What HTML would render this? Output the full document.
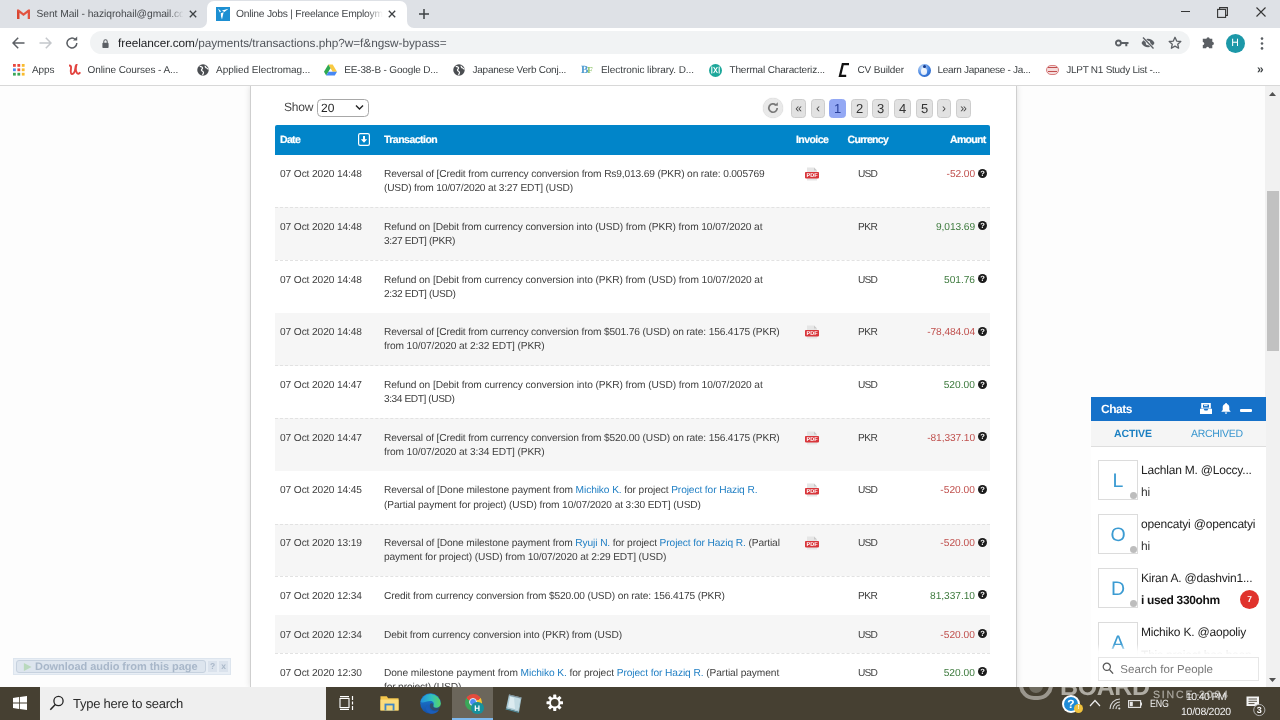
<!DOCTYPE html>
<html>
<head>
<meta charset="utf-8">
<title>Online Jobs | Freelance Employment</title>
<style>
*{box-sizing:border-box;margin:0;padding:0}
html,body{text-rendering:geometricPrecision;width:1280px;height:720px;overflow:hidden;background:#fff;font-family:"Liberation Sans",sans-serif;}
.abs{position:absolute}
#root{will-change:transform;opacity:.999;transform:rotate(0.0005deg);position:relative;width:1280px;height:720px;overflow:hidden;background:#fdfdfd}
/* ---------- chrome ---------- */
#tabbar{left:0;top:0;width:1280px;height:28px;background:#dee1e6}
#tab2{left:207px;top:1px;width:200px;height:27px;background:#fff;border-radius:7px 7px 0 0}
.tabtxt{font-size:10.3px;color:#45484c;white-space:nowrap;overflow:hidden;top:8px;height:14px;line-height:14px;letter-spacing:-0.1px}
#toolbar{left:0;top:28px;width:1280px;height:30px;background:#fff}
#omni{left:90px;top:31px;width:1100px;height:22.5px;border-radius:11.5px;background:#f1f3f4}
#url{left:118px;top:36px;font-size:11.8px;color:#202124;line-height:15px;white-space:nowrap;letter-spacing:-0.12px}
#url span{color:#50545a}
#bmbar{left:0;top:58px;width:1280px;height:28px;background:#fff;border-bottom:1px solid #d8d8d8}
.bm{top:64px;font-size:10px;color:#3c4043;line-height:14px;white-space:nowrap;letter-spacing:-0.1px}
/* ---------- page ---------- */
#page{left:0;top:86px;width:1265px;height:601px;background:#fdfdfd}
#panel{left:250px;top:86px;width:767px;height:601px;background:#fff;border-left:1px solid #cfcfcf;border-right:1px solid #cfcfcf;box-shadow:0 0 6px rgba(0,0,0,.13);clip-path:inset(0 -10px 0 -10px)}
#sbar{left:1265px;top:86px;width:15px;height:601px;background:#f1f1f1}
#sthumb{left:1267px;top:190.5px;width:11.5px;height:160px;background:#c1c1c1}
#thead{left:275px;top:125px;width:715px;height:30px;background:#0085c9;border-radius:2px 2px 0 0}
.th{top:134px;-webkit-text-stroke:0.2px #fff;font-size:10.5px;font-weight:bold;color:#fff;line-height:13px;white-space:nowrap;letter-spacing:-0.35px}
.row{left:275px;width:715px;border-top:1px dashed #e2e2e2}
.row.alt{background:#f6f6f6}
.c{font-size:10.2px;color:#3e3e3e;line-height:14px;white-space:nowrap;letter-spacing:-0.28px}
.c a{color:#1f7fc4;text-decoration:none}
.neg{color:#c0504d}
.pos{color:#3c7a3c}
.pg{top:99px;height:18.5px;border-radius:3.5px;background:#e2e2e2;border:1px solid #cdcdcd;font-size:13px;color:#333;text-align:center;line-height:18.5px}
.pg.ar{font-size:12px;line-height:17.5px;color:#444}
.av{left:1098px;width:40px;height:40px;border:1px solid #dcdcdc;background:#fff;color:#3a9bd2;font-size:19.5px;text-align:center;line-height:40px}
.dot{left:1130px;width:7px;height:7px;border-radius:4px;background:#bdbdbd}
.cn{left:1141px;font-size:12px;color:#222;line-height:15px;white-space:nowrap;letter-spacing:-0.2px}
.cm{left:1141px;font-size:12px;color:#333;line-height:15px;white-space:nowrap;letter-spacing:-0.2px}
.tt{font-size:10.5px;color:#f1f1f1;line-height:14px;white-space:nowrap;letter-spacing:-0.150px}
.pg.cur{background:#93a8f4;border-color:#93a8f4;color:#2a409c}
</style>
</head>
<body>
<div id="root">

<!-- ======= TAB BAR ======= -->
<div id="tabbar" class="abs"></div>
<div id="tab2" class="abs"></div>
<svg class="abs" style="left:200px;top:21px" width="7" height="7" viewBox="0 0 7 7"><path d="M7 0v7h-7a7 7 0 0 0 7-7z" fill="#fff"/></svg>
<svg class="abs" style="left:407px;top:21px" width="7" height="7" viewBox="0 0 7 7"><path d="M0 0v7h7a7 7 0 0 1-7-7z" fill="#fff"/></svg>
<div id="tab1t" class="abs tabtxt" style="letter-spacing:-0.077px;left:36.5px;width:146.5px">Sent Mail - haziqrohail@gmail.co</div>
<div id="tab2t" class="abs tabtxt" style="letter-spacing:-0.245px;left:236px;width:146.5px">Online Jobs | Freelance Employm</div>

<!-- ======= TOOLBAR ======= -->
<div id="toolbar" class="abs"></div>
<div id="omni" class="abs"></div>
<div id="url" class="abs" style="letter-spacing:-0.035px">freelancer.com<span>/payments/transactions.php?w=f&amp;ngsw-bypass=</span></div>

<!-- ======= BOOKMARKS ======= -->
<div id="bmbar" class="abs"></div>
<div id="bm0" class="abs bm" style="letter-spacing:-0.082px;left:32px">Apps</div>
<div id="bm1" class="abs bm" style="letter-spacing:-0.073px;left:87.5px">Online Courses - A...</div>
<div id="bm2" class="abs bm" style="letter-spacing:-0.038px;left:216px">Applied Electromag...</div>
<div id="bm3" class="abs bm" style="letter-spacing:-0.161px;left:344.25px">EE-38-B - Google D...</div>
<div id="bm4" class="abs bm" style="letter-spacing:-0.230px;left:472.5px">Japanese Verb Conj...</div>
<div id="bm5" class="abs bm" style="letter-spacing:-0.054px;left:601px">Electronic library. D...</div>
<div id="bm6" class="abs bm" style="letter-spacing:-0.161px;left:729.5px">Thermal Characteriz...</div>
<div id="bm7" class="abs bm" style="letter-spacing:-0.140px;left:857.5px">CV Builder</div>
<div id="bm8" class="abs bm" style="letter-spacing:-0.296px;left:937.5px">Learn Japanese - Ja...</div>
<div id="bm9" class="abs bm" style="letter-spacing:-0.264px;left:1066.25px">JLPT N1 Study List -...</div>

<!-- ======= CHROME ICONS ======= -->
<!-- gmail -->
<svg class="abs" style="left:17px;top:9px" width="13" height="10" viewBox="0 0 13 10"><path d="M0 0.500h1.800l4.700 3.800l4.700-3.800h1.800v9.500h-2.300v-6.200l-4.200 3.300l-4.200-3.300v6.200h-2.300z" fill="#e2523f"/><path d="M0 1v9h2.300v-6.200z" fill="#d9442f"/></svg>
<svg class="abs cx" style="left:189px;top:10px" width="8" height="8" viewBox="0 0 8 8"><path d="M0.800 0.800l6.400 6.400M7.200 0.800l-6.400 6.400" stroke="#3c4043" stroke-width="1.300"/></svg>
<!-- tab fade -->
<div class="abs" style="left:168px;top:6px;width:16px;height:18px;background:linear-gradient(90deg,rgba(222,225,230,0),#dee1e6)"></div>
<div class="abs" style="left:367px;top:6px;width:16px;height:18px;background:linear-gradient(90deg,rgba(255,255,255,0),#fff)"></div>
<!-- freelancer favicon -->
<svg class="abs" style="left:216px;top:7px" width="14" height="14" viewBox="0 0 14 14"><rect width="14" height="14" fill="#1b8fd2"/><path d="M2 1.500l3 2.800l-1.200 1.200zM6 3.500l6.500-1.800l-4.200 3.200zM4.800 6.200l2.800-1l-1.600 7.300l-1-3z" fill="#fff"/></svg>
<svg class="abs cx" style="left:388px;top:10px" width="8" height="8" viewBox="0 0 8 8"><path d="M0.800 0.800l6.400 6.400M7.200 0.800l-6.400 6.400" stroke="#3c4043" stroke-width="1.300"/></svg>
<svg class="abs" style="left:418px;top:8px" width="12" height="12" viewBox="0 0 12 12"><path d="M6 1v10M1 6h10" stroke="#3c4043" stroke-width="1.500"/></svg>
<!-- window controls -->
<div class="abs" style="left:1181px;top:11px;width:9px;height:1.200px;background:#333"></div>
<svg class="abs" style="left:1217px;top:7px" width="11" height="11" viewBox="0 0 11 11"><rect x="0.600" y="2.400" width="8" height="8" fill="none" stroke="#333" stroke-width="1.100"/><path d="M2.600 2.400v-1.800h7.800v7.800h-1.800" fill="none" stroke="#333" stroke-width="1.100"/></svg>
<svg class="abs" style="left:1256px;top:7px" width="10" height="10" viewBox="0 0 10 10"><path d="M0.500 0.500l9 9M9.500 0.500l-9 9" stroke="#333" stroke-width="1.100"/></svg>
<!-- nav -->
<svg class="abs" style="left:12px;top:37px" width="13" height="12" viewBox="0 0 13 12"><path d="M12.500 6h-11M6.200 0.800l-5.200 5.200l5.200 5.200" fill="none" stroke="#5a5e63" stroke-width="1.500"/></svg>
<svg class="abs" style="left:39px;top:37px" width="13" height="12" viewBox="0 0 13 12"><path d="M0.500 6h11M6.800 0.800l5.200 5.200l-5.200 5.200" fill="none" stroke="#c4c7cb" stroke-width="1.500"/></svg>
<svg class="abs" style="left:65px;top:36px" width="14" height="14" viewBox="0 0 14 14"><path d="M11.800 7a4.900 4.900 0 1 1-1.500-3.500" fill="none" stroke="#5a5e63" stroke-width="1.500"/><path d="M8 4.600h4.200v-4.200z" fill="#5a5e63"/></svg>
<svg class="abs" style="left:101.5px;top:38.5px" width="7" height="9.3" viewBox="0 0 9 12"><rect x="0.500" y="5" width="8" height="6.500" rx="1" fill="#5a5e63"/><path d="M2.300 5.200v-1.900a2.200 2.200 0 0 1 4.400 0v1.900" fill="none" stroke="#5a5e63" stroke-width="1.300"/></svg>
<!-- omnibox right icons -->
<svg class="abs" style="left:1115px;top:39px" width="14" height="8" viewBox="0 0 14 8"><circle cx="3.400" cy="4" r="2.500" fill="none" stroke="#5a5e63" stroke-width="1.800"/><path d="M6 3h7.500v2h-1.200v2.200h-2v-2.200h-4.300z" fill="#5a5e63"/></svg>
<svg class="abs" style="left:1141px;top:37px" width="14" height="12" viewBox="0 0 14 12"><path d="M0.500 6c1.500-3 4-4.300 6.500-4.300s5 1.300 6.500 4.300c-1.500 3-4 4.300-6.500 4.300s-5-1.300-6.500-4.300z" fill="#5a5e63"/><circle cx="7" cy="6" r="2.300" fill="#f1f3f4"/><circle cx="7" cy="6" r="1.100" fill="#5a5e63"/><path d="M2 0.500l10.500 11" stroke="#f1f3f4" stroke-width="2.600"/><path d="M2 0.500l10.500 11" stroke="#5a5e63" stroke-width="1.300"/></svg>
<svg class="abs" style="left:1168px;top:36px" width="14" height="14" viewBox="0 0 14 14"><path d="M7 1.300l1.700 3.800l4.100.400l-3.100 2.700l.900 4l-3.600-2.100l-3.600 2.100l.900-4l-3.100-2.700l4.100-.400z" fill="none" stroke="#5a5e63" stroke-width="1.300" stroke-linejoin="round"/></svg>
<svg class="abs" style="left:1201px;top:36px" width="14" height="14" viewBox="0 0 14 14"><path d="M5.500 2.800a1.600 1.600 0 0 1 3.200 0h2.600v3a1.600 1.600 0 0 1 0 3.200v3.300h-3.200a1.500 1.500 0 0 0-3 0h-3.300v-3.300a1.500 1.500 0 0 0 0-3v-3.200z" fill="#5a5e63"/></svg>
<div class="abs" style="left:1225.500px;top:33.500px;width:19px;height:19px;border-radius:10px;background:#1b98a8;color:#fff;font-size:10.500px;text-align:center;line-height:19px">H</div>
<svg class="abs" style="left:1260px;top:37px" width="4" height="13" viewBox="0 0 4 13"><circle cx="2" cy="1.600" r="1.300" fill="#5a5e63"/><circle cx="2" cy="6.500" r="1.300" fill="#5a5e63"/><circle cx="2" cy="11.400" r="1.300" fill="#5a5e63"/></svg>
<!-- bookmark favicons -->
<svg class="abs" style="left:13px;top:64px" width="12" height="12" viewBox="0 0 12 12"><g><rect x="0" y="0" width="2.800" height="2.800" fill="#e8453c"/><rect x="4.400" y="0" width="2.800" height="2.800" fill="#e8453c"/><rect x="8.800" y="0" width="2.800" height="2.800" fill="#f9bb2d"/><rect x="0" y="4.400" width="2.800" height="2.800" fill="#4688f1"/><rect x="4.400" y="4.400" width="2.800" height="2.800" fill="#e8453c"/><rect x="8.800" y="4.400" width="2.800" height="2.800" fill="#f9bb2d"/><rect x="0" y="8.800" width="2.800" height="2.800" fill="#3aa757"/><rect x="4.400" y="8.800" width="2.800" height="2.800" fill="#3aa757"/><rect x="8.800" y="8.800" width="2.800" height="2.800" fill="#f9bb2d"/></g></svg>
<svg class="abs" style="left:68px;top:64px" width="13" height="12" viewBox="0 0 13 12"><path d="M1 1.500c2 0 2.200 1 2 3s-.800 5 .800 5.500s3.200-2 3.400-5s.500-3.700 1.300-4.200c-.600 2 -1 6 .300 8s2.700.500 3.400-.600" fill="none" stroke="#e2433f" stroke-width="1.900"/></svg>
<svg class="abs gl" style="left:196.7px;top:64px" width="12" height="12" viewBox="0 0 13 13"><circle cx="6.500" cy="6.500" r="6.200" fill="#4a4d51"/><path d="M3 2.500c1 .500 2.500.300 3 1.500s-1.500 1.500-1.200 2.700s2 1 2.200 2.300s-1 2-.800 3.200M9 2c-.500 1 .500 2 1.500 2.300s1.500 1.500 1.800 1.500" fill="none" stroke="#fff" stroke-width="1.300"/></svg>
<svg class="abs" style="left:324px;top:64px" width="13" height="12" viewBox="0 0 13 12"><path d="M4.300 0.500h4.400l4.300 7.300h-4.400z" fill="#f9c941"/><path d="M4.300 0.500l-4.300 7.300l2.200 3.700l4.300-7.300z" fill="#2da94f"/><path d="M4.400 7.800h8.600l-2.200 3.700h-8.600z" fill="#4688f4"/></svg>
<svg class="abs gl" style="left:453.2px;top:64px" width="12" height="12" viewBox="0 0 13 13"><circle cx="6.500" cy="6.500" r="6.200" fill="#4a4d51"/><path d="M3 2.500c1 .500 2.500.300 3 1.500s-1.500 1.500-1.200 2.700s2 1 2.200 2.300s-1 2-.800 3.200M9 2c-.500 1 .500 2 1.500 2.300s1.500 1.500 1.800 1.500" fill="none" stroke="#fff" stroke-width="1.300"/></svg>
<div class="abs" style="left:581px;top:63px;width:14px;height:14px;font-family:'Liberation Serif',serif;font-size:11px;font-weight:bold;line-height:14px;color:#4b9ad0;letter-spacing:-1px">B<span style="color:#8fc46a;font-size:9px">F</span></div>
<div class="abs" style="left:709px;top:63.500px;width:13px;height:13px;border-radius:7px;background:#1ba79a"></div>
<svg class="abs" style="left:711px;top:66px" width="9" height="8" viewBox="0 0 9 8"><path d="M0.800 7.500v-7M8.200 7.500v-7M2.600 1l3.800 6M6.400 1l-3.800 6" fill="none" stroke="#fff" stroke-width="1.100"/></svg>
<svg class="abs" style="left:838px;top:63px" width="12" height="14" viewBox="0 0 12 14"><path d="M11 1.200h-6.200l-2.800 11.600h6.200" fill="none" stroke="#111" stroke-width="2.300"/></svg>
<div class="abs" style="left:917.500px;top:63.500px;width:13px;height:13px;border-radius:7px;background:radial-gradient(circle at 35% 30%,#cfe3fb,#3c7fe0 55%,#1d4fb0)"></div>
<div class="abs" style="left:921px;top:68px;width:6px;height:7px;border-radius:3px;background:#fff;opacity:.85"></div>
<div class="abs" style="left:923px;top:65px;width:3px;height:3px;border-radius:2px;background:#143b8f"></div>
<div class="abs" style="left:1046px;top:65px;width:13px;height:10px;border-radius:5px;background:#f4dcdc;border:1px solid #d87f7f"></div>
<div class="abs" style="left:1048px;top:67px;width:9px;height:5px;border-top:1.500px solid #c14c4c;border-bottom:1.500px solid #c14c4c"></div>
<div class="abs" style="left:1257px;top:62px;font-size:12px;font-weight:bold;color:#3c4043;line-height:14px">&raquo;</div>

<!-- ======= PAGE ======= -->
<div id="page" class="abs"></div>
<div id="panel" class="abs"></div>
<div id="sbar" class="abs"></div>
<div id="sthumb" class="abs"></div>

<!-- show / pagination -->
<div class="abs" style="left:284px;top:100px;font-size:12px;color:#444;line-height:15px;letter-spacing:-0.2px">Show</div>
<div class="abs" style="left:317px;top:99px;width:52px;height:18px;border:1px solid #a8a8a8;border-radius:4.5px;background:#fff"></div>
<div class="abs" style="left:321px;top:101px;font-size:12px;color:#222;line-height:15px">20</div>
<svg class="abs" style="left:355px;top:104px" width="9" height="7" viewBox="0 0 9 7"><path d="M1 1.5l3.5 3.5l3.5-3.5" fill="none" stroke="#222" stroke-width="1.4"/></svg>

<div class="abs" style="left:763px;top:98px;width:20px;height:20px;border-radius:10px;background:#e9e9e9;box-shadow:0 0 1px #bbb"></div>
<svg class="abs" style="left:766px;top:101px" width="14" height="14" viewBox="0 0 14 14"><path d="M11.2 7a4.2 4.2 0 1 1-1.3-3" fill="none" stroke="#777" stroke-width="1.7"/><path d="M8.2 4.8h3.6v-3.6z" fill="#777"/></svg>

<div class="abs pg ar" style="left:791px;width:15px">&laquo;</div>
<div class="abs pg ar" style="left:811px;width:14px">&lsaquo;</div>
<div class="abs pg cur" style="left:829px;width:17px">1</div>
<div class="abs pg" style="left:851px;width:17px">2</div>
<div class="abs pg" style="left:872px;width:17px">3</div>
<div class="abs pg" style="left:894px;width:17px">4</div>
<div class="abs pg" style="left:916px;width:17px">5</div>
<div class="abs pg ar" style="left:937px;width:14px">&rsaquo;</div>
<div class="abs pg ar" style="left:956px;width:15px">&raquo;</div>

<!-- table header -->
<div id="thead" class="abs"></div>
<div id="th0" class="abs th" style="letter-spacing:-0.655px;left:280px">Date</div>
<svg class="abs" style="left:358px;top:133px" width="12" height="13" viewBox="0 0 12 13"><rect x="0.6" y="0.6" width="10.8" height="11.8" rx="1.6" fill="none" stroke="#fff" stroke-width="1.2"/><path d="M5 3h2v3.2h2.2L6 9.8 2.8 6.200H5z" fill="#fff"/></svg>
<div id="th1" class="abs th" style="letter-spacing:-0.524px;left:384px">Transaction</div>
<div id="th2" class="abs th" style="letter-spacing:-0.565px;left:796px">Invoice</div>
<div id="th3" class="abs th" style="letter-spacing:-0.701px;left:847.6px">Currency</div>
<div id="th4" class="abs th" style="letter-spacing:-0.694px;right:294.5px">Amount</div>

<!--ROWS-->
<div class="abs row" style="top:154.6px;height:52.9px;border-top:0"></div>
<div id="r0d" class="abs c" style="letter-spacing:-0.114px;left:280px;top:168px">07 Oct 2020 14:48</div>
<div id="r0l0" class="abs c" style="letter-spacing:-0.149px;left:384px;top:168px">Reversal of [Credit from currency conversion from Rs9,013.69 (PKR) on rate: 0.005769</div>
<div id="r0l1" class="abs c" style="letter-spacing:-0.189px;left:384px;top:182px">(USD) from 10/07/2020 at 3:27 EDT] (USD)</div>
<svg class="abs" style="left:805px;top:167.1px" width="14" height="14" viewBox="0 0 14 14"><path d="M2 0.5h7l3 3v10h-10z" fill="#e6e6e6"/><path d="M9 0.5v3h3z" fill="#c9c9c9"/><rect x="0" y="5" width="14" height="6.4" rx="0.8" fill="#d8353a"/><text x="7" y="10.3" font-family="Liberation Sans" font-weight="bold" font-size="5.6" fill="#fff" text-anchor="middle">PDF</text></svg>
<div id="r0c" class="abs c" style="letter-spacing:-0.858px;left:858px;top:168px">USD</div>
<div id="r0a" class="abs c neg" style="letter-spacing:-0.078px;right:305px;top:168px">-52.00</div>
<svg class="abs" style="left:977.5px;top:168.7px" width="9" height="9" viewBox="0 0 9 9"><circle cx="4.5" cy="4.5" r="4.5" fill="#1a1a1a"/><text x="4.5" y="7.3" font-family="Liberation Sans" font-weight="bold" font-size="7.5" fill="#fff" text-anchor="middle">?</text></svg>
<div class="abs row alt" style="top:207.3px;height:52.9px"></div>
<div id="r1d" class="abs c" style="letter-spacing:-0.114px;left:280px;top:221px">07 Oct 2020 14:48</div>
<div id="r1l0" class="abs c" style="letter-spacing:-0.095px;left:384px;top:221px">Refund on [Debit from currency conversion into (USD) from (PKR) from 10/07/2020 at</div>
<div id="r1l1" class="abs c" style="letter-spacing:-0.367px;left:384px;top:235px">3:27 EDT] (PKR)</div>
<div id="r1c" class="abs c" style="letter-spacing:-0.577px;left:858px;top:221px">PKR</div>
<div id="r1a" class="abs c pos" style="letter-spacing:-0.079px;right:305px;top:221px">9,013.69</div>
<svg class="abs" style="left:977.5px;top:221.4px" width="9" height="9" viewBox="0 0 9 9"><circle cx="4.5" cy="4.5" r="4.5" fill="#1a1a1a"/><text x="4.5" y="7.3" font-family="Liberation Sans" font-weight="bold" font-size="7.5" fill="#fff" text-anchor="middle">?</text></svg>
<div class="abs row" style="top:260.0px;height:52.9px"></div>
<div id="r2d" class="abs c" style="letter-spacing:-0.114px;left:280px;top:274px">07 Oct 2020 14:48</div>
<div id="r2l0" class="abs c" style="letter-spacing:-0.091px;left:384px;top:274px">Refund on [Debit from currency conversion into (PKR) from (USD) from 10/07/2020 at</div>
<div id="r2l1" class="abs c" style="letter-spacing:-0.371px;left:384px;top:288px">2:32 EDT] (USD)</div>
<div id="r2c" class="abs c" style="letter-spacing:-0.858px;left:858px;top:274px">USD</div>
<div id="r2a" class="abs c pos" style="letter-spacing:-0.034px;right:305px;top:274px">501.76</div>
<svg class="abs" style="left:977.5px;top:274.1px" width="9" height="9" viewBox="0 0 9 9"><circle cx="4.5" cy="4.5" r="4.5" fill="#1a1a1a"/><text x="4.5" y="7.3" font-family="Liberation Sans" font-weight="bold" font-size="7.5" fill="#fff" text-anchor="middle">?</text></svg>
<div class="abs row alt" style="top:312.7px;height:52.9px;border-top:0"></div>
<div id="r3d" class="abs c" style="letter-spacing:-0.114px;left:280px;top:326px">07 Oct 2020 14:48</div>
<div id="r3l0" class="abs c" style="letter-spacing:-0.152px;left:384px;top:326px">Reversal of [Credit from currency conversion from $501.76 (USD) on rate: 156.4175 (PKR)</div>
<div id="r3l1" class="abs c" style="letter-spacing:-0.124px;left:384px;top:340px">from 10/07/2020 at 2:32 EDT] (PKR)</div>
<svg class="abs" style="left:805px;top:325.2px" width="14" height="14" viewBox="0 0 14 14"><path d="M2 0.5h7l3 3v10h-10z" fill="#e6e6e6"/><path d="M9 0.5v3h3z" fill="#c9c9c9"/><rect x="0" y="5" width="14" height="6.4" rx="0.8" fill="#d8353a"/><text x="7" y="10.3" font-family="Liberation Sans" font-weight="bold" font-size="5.6" fill="#fff" text-anchor="middle">PDF</text></svg>
<div id="r3c" class="abs c" style="letter-spacing:-0.577px;left:858px;top:326px">PKR</div>
<div id="r3a" class="abs c neg" style="letter-spacing:-0.091px;right:305px;top:326px">-78,484.04</div>
<svg class="abs" style="left:977.5px;top:326.8px" width="9" height="9" viewBox="0 0 9 9"><circle cx="4.5" cy="4.5" r="4.5" fill="#1a1a1a"/><text x="4.5" y="7.3" font-family="Liberation Sans" font-weight="bold" font-size="7.5" fill="#fff" text-anchor="middle">?</text></svg>
<div class="abs row" style="top:365.4px;height:52.9px"></div>
<div id="r4d" class="abs c" style="letter-spacing:-0.114px;left:280px;top:379px">07 Oct 2020 14:47</div>
<div id="r4l0" class="abs c" style="letter-spacing:-0.091px;left:384px;top:379px">Refund on [Debit from currency conversion into (PKR) from (USD) from 10/07/2020 at</div>
<div id="r4l1" class="abs c" style="letter-spacing:-0.443px;left:384px;top:393px">3:34 EDT] (USD)</div>
<div id="r4c" class="abs c" style="letter-spacing:-0.858px;left:858px;top:379px">USD</div>
<div id="r4a" class="abs c pos" style="letter-spacing:0.026px;right:305px;top:379px">520.00</div>
<svg class="abs" style="left:977.5px;top:379.5px" width="9" height="9" viewBox="0 0 9 9"><circle cx="4.5" cy="4.5" r="4.5" fill="#1a1a1a"/><text x="4.5" y="7.3" font-family="Liberation Sans" font-weight="bold" font-size="7.5" fill="#fff" text-anchor="middle">?</text></svg>
<div class="abs row alt" style="top:418.1px;height:52.9px"></div>
<div id="r5d" class="abs c" style="letter-spacing:-0.114px;left:280px;top:432px">07 Oct 2020 14:47</div>
<div id="r5l0" class="abs c" style="letter-spacing:-0.152px;left:384px;top:432px">Reversal of [Credit from currency conversion from $520.00 (USD) on rate: 156.4175 (PKR)</div>
<div id="r5l1" class="abs c" style="letter-spacing:-0.124px;left:384px;top:446px">from 10/07/2020 at 3:34 EDT] (PKR)</div>
<svg class="abs" style="left:805px;top:430.6px" width="14" height="14" viewBox="0 0 14 14"><path d="M2 0.5h7l3 3v10h-10z" fill="#e6e6e6"/><path d="M9 0.5v3h3z" fill="#c9c9c9"/><rect x="0" y="5" width="14" height="6.4" rx="0.8" fill="#d8353a"/><text x="7" y="10.3" font-family="Liberation Sans" font-weight="bold" font-size="5.6" fill="#fff" text-anchor="middle">PDF</text></svg>
<div id="r5c" class="abs c" style="letter-spacing:-0.577px;left:858px;top:432px">PKR</div>
<div id="r5a" class="abs c neg" style="letter-spacing:-0.091px;right:305px;top:432px">-81,337.10</div>
<svg class="abs" style="left:977.5px;top:432.2px" width="9" height="9" viewBox="0 0 9 9"><circle cx="4.5" cy="4.5" r="4.5" fill="#1a1a1a"/><text x="4.5" y="7.3" font-family="Liberation Sans" font-weight="bold" font-size="7.5" fill="#fff" text-anchor="middle">?</text></svg>
<div class="abs row" style="top:470.8px;height:52.9px;border-top:0"></div>
<div id="r6d" class="abs c" style="letter-spacing:-0.114px;left:280px;top:484px">07 Oct 2020 14:45</div>
<div id="r6l0" class="abs c" style="letter-spacing:-0.105px;left:384px;top:484px">Reversal of [Done milestone payment from <a>Michiko K.</a> for project <a>Project for Haziq R.</a></div>
<div id="r6l1" class="abs c" style="letter-spacing:-0.116px;left:384px;top:499px">(Partial payment for project) (USD) from 10/07/2020 at 3:30 EDT] (USD)</div>
<svg class="abs" style="left:805px;top:483.3px" width="14" height="14" viewBox="0 0 14 14"><path d="M2 0.5h7l3 3v10h-10z" fill="#e6e6e6"/><path d="M9 0.5v3h3z" fill="#c9c9c9"/><rect x="0" y="5" width="14" height="6.4" rx="0.8" fill="#d8353a"/><text x="7" y="10.3" font-family="Liberation Sans" font-weight="bold" font-size="5.6" fill="#fff" text-anchor="middle">PDF</text></svg>
<div id="r6c" class="abs c" style="letter-spacing:-0.858px;left:858px;top:484px">USD</div>
<div id="r6a" class="abs c neg" style="letter-spacing:0.023px;right:305px;top:484px">-520.00</div>
<svg class="abs" style="left:977.5px;top:484.9px" width="9" height="9" viewBox="0 0 9 9"><circle cx="4.5" cy="4.5" r="4.5" fill="#1a1a1a"/><text x="4.5" y="7.3" font-family="Liberation Sans" font-weight="bold" font-size="7.5" fill="#fff" text-anchor="middle">?</text></svg>
<div class="abs row alt" style="top:523.5px;height:52.9px"></div>
<div id="r7d" class="abs c" style="letter-spacing:-0.114px;left:280px;top:537px">07 Oct 2020 13:19</div>
<div id="r7l0" class="abs c" style="letter-spacing:-0.112px;left:384px;top:537px">Reversal of [Done milestone payment from <a>Ryuji N.</a> for project <a>Project for Haziq R.</a> (Partial</div>
<div id="r7l1" class="abs c" style="letter-spacing:-0.125px;left:384px;top:551px">payment for project) (USD) from 10/07/2020 at 2:29 EDT] (USD)</div>
<svg class="abs" style="left:805px;top:536.0px" width="14" height="14" viewBox="0 0 14 14"><path d="M2 0.5h7l3 3v10h-10z" fill="#e6e6e6"/><path d="M9 0.5v3h3z" fill="#c9c9c9"/><rect x="0" y="5" width="14" height="6.4" rx="0.8" fill="#d8353a"/><text x="7" y="10.3" font-family="Liberation Sans" font-weight="bold" font-size="5.6" fill="#fff" text-anchor="middle">PDF</text></svg>
<div id="r7c" class="abs c" style="letter-spacing:-0.858px;left:858px;top:537px">USD</div>
<div id="r7a" class="abs c neg" style="letter-spacing:0.023px;right:305px;top:537px">-520.00</div>
<svg class="abs" style="left:977.5px;top:537.6px" width="9" height="9" viewBox="0 0 9 9"><circle cx="4.5" cy="4.5" r="4.5" fill="#1a1a1a"/><text x="4.5" y="7.3" font-family="Liberation Sans" font-weight="bold" font-size="7.5" fill="#fff" text-anchor="middle">?</text></svg>
<div class="abs row" style="top:576.2px;height:38.7px"></div>
<div id="r8d" class="abs c" style="letter-spacing:-0.114px;left:280px;top:590px">07 Oct 2020 12:34</div>
<div id="r8l0" class="abs c" style="letter-spacing:-0.148px;left:384px;top:590px">Credit from currency conversion from $520.00 (USD) on rate: 156.4175 (PKR)</div>
<div id="r8c" class="abs c" style="letter-spacing:-0.577px;left:858px;top:590px">PKR</div>
<div id="r8a" class="abs c pos" style="letter-spacing:-0.041px;right:305px;top:590px">81,337.10</div>
<svg class="abs" style="left:977.5px;top:590.3px" width="9" height="9" viewBox="0 0 9 9"><circle cx="4.5" cy="4.5" r="4.5" fill="#1a1a1a"/><text x="4.5" y="7.3" font-family="Liberation Sans" font-weight="bold" font-size="7.5" fill="#fff" text-anchor="middle">?</text></svg>
<div class="abs row alt" style="top:614.7px;height:38.7px;border-top:0"></div>
<div id="r9d" class="abs c" style="letter-spacing:-0.114px;left:280px;top:629px">07 Oct 2020 12:34</div>
<div id="r9l0" class="abs c" style="letter-spacing:-0.138px;left:384px;top:629px">Debit from currency conversion into (PKR) from (USD)</div>
<div id="r9c" class="abs c" style="letter-spacing:-0.858px;left:858px;top:629px">USD</div>
<div id="r9a" class="abs c neg" style="letter-spacing:0.023px;right:305px;top:629px">-520.00</div>
<svg class="abs" style="left:977.5px;top:628.8px" width="9" height="9" viewBox="0 0 9 9"><circle cx="4.5" cy="4.5" r="4.5" fill="#1a1a1a"/><text x="4.5" y="7.3" font-family="Liberation Sans" font-weight="bold" font-size="7.5" fill="#fff" text-anchor="middle">?</text></svg>
<div class="abs row" style="top:653.2px;height:52.9px"></div>
<div id="r10d" class="abs c" style="letter-spacing:-0.114px;left:280px;top:667px">07 Oct 2020 12:30</div>
<div id="r10l0" class="abs c" style="letter-spacing:-0.078px;left:384px;top:667px">Done milestone payment from <a>Michiko K.</a> for project <a>Project for Haziq R.</a> (Partial payment</div>
<div id="r10l1" class="abs c" style="letter-spacing:-0.149px;left:384px;top:681px">for project) (USD)</div>
<div id="r10c" class="abs c" style="letter-spacing:-0.858px;left:858px;top:667px">USD</div>
<div id="r10a" class="abs c pos" style="letter-spacing:0.026px;right:305px;top:667px">520.00</div>
<svg class="abs" style="left:977.5px;top:667.3px" width="9" height="9" viewBox="0 0 9 9"><circle cx="4.5" cy="4.5" r="4.5" fill="#1a1a1a"/><text x="4.5" y="7.3" font-family="Liberation Sans" font-weight="bold" font-size="7.5" fill="#fff" text-anchor="middle">?</text></svg>
<!--/ROWS-->

<!-- ======= CHAT WIDGET ======= -->
<div class="abs" style="left:1091px;top:397px;width:175px;height:290px;background:#fff"></div>
<div class="abs" style="left:1091px;top:397px;width:175px;height:24px;background:#1470c9"></div>
<div class="abs" style="left:1101px;top:402px;font-size:12px;font-weight:bold;color:#fff;line-height:14px;letter-spacing:-0.5px">Chats</div>
<svg class="abs" style="left:1200px;top:403px" width="12" height="11" viewBox="0 0 12 11"><path d="M1.2 0h9.600v5.500h-9.600z" fill="#fff"/><path d="M3 1.600h6v3h-6z" fill="#1470c9"/><path d="M4 2.600h3.500" stroke="#fff" stroke-width="0.9"/><path d="M0 5.800h3.600l1 1.700h2.800l1-1.700h3.600v5.200h-12z" fill="#fff"/></svg>
<svg class="abs" style="left:1221px;top:403px" width="10" height="11" viewBox="0 0 10 11"><path d="M5 0c.6 0 1 .4 1 .9 1.500.5 2.300 1.800 2.300 3.400v2.600l1.200 1.400v.5h-9v-.5l1.200-1.400v-2.600c0-1.600.8-2.900 2.300-3.400 0-.5.400-.9 1-.9z" fill="#fff"/><path d="M3.800 9.500h2.400a1.200 1.200 0 0 1-2.400 0z" fill="#fff"/></svg>
<div class="abs" style="left:1240px;top:409px;width:12px;height:3px;background:#fff;border-radius:1px"></div>
<div class="abs" style="left:1091px;top:421px;width:175px;height:25.500px;background:#f5f5f5;border-bottom:1px solid #dedede"></div>
<div id="cact" class="abs" style="letter-spacing:-0.103px;left:1114px;top:428px;font-size:10.500px;font-weight:bold;color:#1b80c2;line-height:13px">ACTIVE</div>
<div id="carc" class="abs" style="letter-spacing:-0.324px;left:1191px;top:428px;font-size:10.500px;color:#3a97cf;line-height:13px">ARCHIVED</div>

<div class="abs av" style="top:460px">L</div><div class="abs dot" style="top:492px"></div>
<div class="abs cn" style="top:463px">Lachlan M. @Loccy...</div>
<div class="abs cm" style="top:485px">hi</div>
<div class="abs av" style="top:514px">O</div><div class="abs dot" style="top:546px"></div>
<div class="abs cn" style="top:517px">opencatyi @opencatyi</div>
<div class="abs cm" style="top:539px">hi</div>
<div class="abs av" style="top:568px">D</div><div class="abs dot" style="top:600px"></div>
<div class="abs cn" style="top:571px">Kiran A. @dashvin1...</div>
<div class="abs cm" style="top:593px;font-weight:bold;color:#111;letter-spacing:-0.35px">i used 330ohm</div>
<div class="abs" style="left:1240px;top:590px;width:19px;height:19px;border-radius:10px;background:#e0312b;color:#fff;font-size:8.500px;font-weight:bold;text-align:center;line-height:18px">7</div>
<div class="abs av" style="top:622px">A</div>
<div class="abs cn" style="top:625px">Michiko K. @aopoliy</div>
<div class="abs cm" style="left:1141px;top:648px;height:6px;overflow:hidden;color:#555">This project has been</div>
<div class="abs" style="left:1092px;top:644px;width:173px;height:13px;background:linear-gradient(180deg,rgba(255,255,255,0),rgba(255,255,255,.9) 55%,#fff)"></div>
<div class="abs" style="left:1098px;top:657px;width:161px;height:24px;background:#fff;border:1px solid #e6e6e6"></div>
<svg class="abs" style="left:1102px;top:662px" width="12" height="13" viewBox="0 0 12 13"><circle cx="4.800" cy="4.800" r="3.600" fill="none" stroke="#555" stroke-width="1.200"/><path d="M7.500 7.600l3.600 4" stroke="#555" stroke-width="1.400"/></svg>
<div id="sfp" class="abs" style="letter-spacing:0.040px;left:1120.3px;top:663px;font-size:11.500px;color:#777;line-height:14px">Search for People</div>
<svg class="abs" style="left:1269px;top:678px" width="7" height="5" viewBox="0 0 7 5"><path d="M0 0h7l-3.500 4z" fill="#505050"/></svg>
<svg class="abs" style="left:1269px;top:92px" width="7" height="5" viewBox="0 0 7 5"><path d="M0 4h7l-3.500-4z" fill="#505050"/></svg>

<!-- download audio widget -->
<div class="abs" style="left:13px;top:658px;width:218px;height:16.500px;background:#e8eef5;border:1px solid #dde5ee"></div>
<div class="abs" style="left:16px;top:660px;width:190px;height:13px;background:#dde5ee;border-radius:3px;border:1px solid #c6d1de"></div>
<svg class="abs" style="left:23px;top:662px" width="9" height="10" viewBox="0 0 10 10"><path d="M1 0.500l8.500 4.500l-8.500 4.500z" fill="#b9d9bd"/></svg>
<div id="dla" class="abs" style="letter-spacing:-0.042px;left:35px;top:660px;font-size:11px;font-weight:bold;color:#a8b7c9;line-height:14px;white-space:nowrap">Download audio from this page</div>
<div class="abs" style="left:208px;top:661px;width:9px;height:11px;background:#dae2ec;font-size:8.500px;font-weight:bold;color:#aab8c9;text-align:center;line-height:11px">?</div>
<div class="abs" style="left:219px;top:661px;width:9px;height:11px;background:#dae2ec;font-size:8.500px;font-weight:bold;color:#aab8c9;text-align:center;line-height:11px">x</div>

<!-- ======= TASKBAR ======= -->
<div class="abs" style="left:0;top:687px;width:1280px;height:33px;background:#453f31"></div>
<svg class="abs" style="left:13px;top:696px" width="14" height="14" viewBox="0 0 14 14"><path d="M0 2l6-.900v5.500h-6zM6.800 1l7.200-1v6.600h-7.200zM0 7.400h6v5.500l-6-.900zM6.800 7.400h7.200v6.600l-7.200-1z" fill="#fff"/></svg>
<div class="abs" style="left:40px;top:687px;width:286px;height:33px;background:#efefef"></div>
<svg class="abs" style="left:49px;top:695px" width="16" height="16" viewBox="0 0 16 16"><circle cx="9.500" cy="6" r="4.600" fill="none" stroke="#222" stroke-width="1.300"/><path d="M6.300 9.400l-5 5.300" stroke="#222" stroke-width="1.500"/></svg>
<div id="tsearch" class="abs" style="letter-spacing:-0.256px;left:73px;top:696px;font-size:13px;color:#2a2a2a;line-height:16px">Type here to search</div>
<!-- task view -->
<svg class="abs" style="left:339px;top:696px" width="16" height="14" viewBox="0 0 16 14"><path d="M1 2.500h9v9h-9z" fill="none" stroke="#fff" stroke-width="1.100"/><path d="M1 0.600h9M1 13.400h9" stroke="#fff" stroke-width="1.100"/><path d="M13.500 0v4M13.500 5.500v3M13.500 10v4" stroke="#fff" stroke-width="1.200"/></svg>
<!-- explorer -->
<svg class="abs" style="left:380px;top:694.5px" width="19" height="16.300" viewBox="0 0 21 18"><path d="M0.500 1.500h7l1.500 2h11.500v13.500h-20z" fill="#f4c64b"/><path d="M0.500 5h20v12h-20z" fill="#fbdc7c"/><path d="M5 9.500h11v7.500h-11z" fill="#3d86c6"/><path d="M7 11.500h7v5.500h-7z" fill="#fbdc7c"/></svg>
<!-- edge -->
<svg class="abs" style="left:420px;top:693px" width="21" height="21" viewBox="0 0 21 21"><defs><linearGradient id="eg1" x1="0" y1="0" x2="1" y2="0"><stop offset="0" stop-color="#1f8fe0"/><stop offset=".55" stop-color="#2fc0c0"/><stop offset="1" stop-color="#5ad45f"/></linearGradient><linearGradient id="eg2" x1="0" y1="0" x2="0" y2="1"><stop offset="0" stop-color="#1c7fd8"/><stop offset="1" stop-color="#134fa6"/></linearGradient></defs><circle cx="10.500" cy="10.500" r="10.300" fill="url(#eg2)"/><path d="M0.500 9a10.300 10.300 0 0 1 20.300 1.500c0 3-2.300 4.300-4.500 4.300c-2.500 0-3.300-1.500-2.800-2.600c.700-1.500.300-4.200-3.200-4.200c-4 0-7.500 2.500-9.800 1z" fill="url(#eg1)"/><path d="M8.500 11.500c-.600 3.500 2 6.500 5.500 6.800c2 .200 3.800-.500 5-1.500c-1.500 2.600-4.500 4.200-7.500 4c-3.500-.300-6-3.300-5.500-6.300c.300-1.500 1.300-2.700 2.500-3z" fill="#1a5dbb"/><path d="M13.300 12.300c-.500 1.500.500 2.700 2.700 2.700c2.500 0 4.500-1.700 4.700-4c.300 2-.200 3.800-1.500 5.500c-1.500 1-3.500 1.300-5.200 1c-2.800-.500-4.500-3-4.200-5.300c.200-1 .600-1.800 1.500-2c1.200-.200 2.400.800 2 2.100z" fill="#453f31" opacity=".55"/></svg>
<!-- chrome (active) -->
<div class="abs" style="left:452px;top:687px;width:41px;height:33px;background:#6a655a"></div>
<div class="abs" style="left:452px;top:718px;width:41px;height:2px;background:#7db9ee"></div>
<div class="abs" style="left:464.5px;top:693.5px;width:17px;height:17px;border-radius:9px;background:conic-gradient(from -60deg,#e34a3c 0 120deg,#f6c32e 120deg 240deg,#3aa757 240deg 360deg)"></div>
<div class="abs" style="left:469px;top:698px;width:8px;height:8px;border-radius:4px;background:#4c8bf5;border:1.200px solid #f2f2f2"></div>
<div class="abs" style="left:471px;top:701.5px;width:12.500px;height:12.500px;border-radius:7px;background:#16909c;color:#fff;font-size:8px;font-weight:bold;text-align:center;line-height:13px">H</div>
<!-- notepad -->
<svg class="abs" style="left:503px;top:693px" width="20" height="20" viewBox="0 0 20 20"><path d="M6 1.500l12.500 3l-2.500 14.500l-13-3.500z" fill="#a9c9d4"/><path d="M7 3.500l10 2.400l-2 11l-10-2.700z" fill="#dcebf0"/><path d="M11 4.500l6 1.400l-2 11l-3-.8z" fill="#c3dbe3"/><path d="M3 15.500l13 3.500l-.2 1l-13.300-3.600z" fill="#4f8c9c"/><path d="M6 1.500l12.500 3l-.2 1.100l-12.500-3z" fill="#7d8d96"/></svg>
<!-- settings -->
<svg class="abs" style="left:545.5px;top:694px" width="17.500" height="17.500" viewBox="0 0 18 18"><g fill="#fff"><circle cx="9" cy="9" r="5.900"/><rect x="7.400" y="0.500" width="3.200" height="3.500" rx=".5"/><rect x="7.400" y="14" width="3.200" height="3.500" rx=".5"/><g transform="rotate(45 9 9)"><rect x="7.400" y="0.500" width="3.200" height="3.500" rx=".5"/><rect x="7.400" y="14" width="3.200" height="3.500" rx=".5"/></g><g transform="rotate(90 9 9)"><rect x="7.400" y="0.500" width="3.200" height="3.500" rx=".5"/><rect x="7.400" y="14" width="3.200" height="3.500" rx=".5"/></g><g transform="rotate(135 9 9)"><rect x="7.400" y="0.500" width="3.200" height="3.500" rx=".5"/><rect x="7.400" y="14" width="3.200" height="3.500" rx=".5"/></g></g><circle cx="9" cy="9" r="3.900" fill="#453f31"/></svg>

<!-- watermark -->
<div class="abs" style="left:0;top:687px;width:1280px;height:33px;overflow:hidden">
<div class="abs" style="left:1019px;top:-17px;width:34px;height:30px;border-radius:17px;border:4px solid rgba(200,198,192,.66)"></div>
<div class="abs" style="left:1029px;top:-10px;width:14px;height:16px;border-radius:0 0 7px 7px;background:rgba(190,188,182,.35)"></div>
<div id="wm1" class="abs" style="letter-spacing:-0.418px;left:1060px;top:-13px;font-size:25px;font-weight:bold;color:rgba(205,203,196,.78);line-height:26px">BOARD</div>
<div id="wm2" class="abs" style="letter-spacing:1.847px;left:1153px;top:2px;font-size:10.500px;color:rgba(205,203,197,.72);line-height:13px;white-space:nowrap;-webkit-text-stroke:.25px rgba(205,203,197,.6)">SINCE 2004</div>
</div>

<!-- tray -->
<div class="abs" style="left:1062px;top:695px;width:18px;height:18px;border-radius:9px;background:#fff"></div>
<div class="abs" style="left:1064px;top:697px;width:14px;height:14px;border-radius:7px;background:#1d8bd6;color:#fff;font-size:12px;font-weight:bold;text-align:center;line-height:14px">?</div>
<div class="abs" style="left:1074px;top:704px;width:9px;height:9px;border-radius:5px;background:#f0c23b;color:#fff;font-size:6px;font-weight:bold;text-align:center;line-height:9px">!</div>
<svg class="abs" style="left:1089px;top:699px" width="12" height="8" viewBox="0 0 12 8"><path d="M1 7l5-5.500l5 5.500" fill="none" stroke="#eee" stroke-width="1.200"/></svg>
<svg class="abs" style="left:1109px;top:698px" width="12" height="12" viewBox="0 0 12 12"><g fill="none" stroke="#ddd" stroke-width="1.100"><path d="M1 11a10 10 0 0 1 10-10" opacity=".95"/><path d="M4 11a7 7 0 0 1 7-7"/><path d="M7 11a4 4 0 0 1 4-4"/></g><circle cx="10.300" cy="10.500" r="1.100" fill="#ddd"/></svg>
<svg class="abs" style="left:1128px;top:700px" width="14" height="8" viewBox="0 0 14 8"><rect x="0.600" y="0.600" width="12" height="6.800" fill="none" stroke="#e8e8e8" stroke-width="1.100"/><rect x="1.800" y="1.800" width="3" height="4.400" fill="#e8e8e8"/><rect x="13" y="2.500" width="1" height="3" fill="#e8e8e8"/></svg>
<div class="abs tt" style="left:1150.3px;top:697px;transform:scaleX(.84);transform-origin:0 0">ENG</div>
<div id="tt2" class="abs tt" style="letter-spacing:-0.622px;left:1186px;top:690px">10:40 PM</div>
<div id="tt3" class="abs tt" style="letter-spacing:-0.263px;left:1181px;top:705px">10/08/2020</div>
<svg class="abs" style="left:1246px;top:696px" width="22" height="22" viewBox="0 0 22 22"><path d="M0.500 0.500h12.500v9.500h-3.500l3.500 3.500v-3.500h-12.500z" fill="#f4f4f4"/><path d="M2.500 3h8.500M2.500 5.300h8.500M2.500 7.600h6" stroke="#453f31" stroke-width="0.900"/><circle cx="13.300" cy="14" r="5.600" fill="#453f31" stroke="#bbb" stroke-width="0.900"/><text x="13.300" y="17.300" font-family="Liberation Sans" font-weight="bold" font-size="9" fill="#fff" text-anchor="middle">3</text></svg>



</div>
</body>
</html>
